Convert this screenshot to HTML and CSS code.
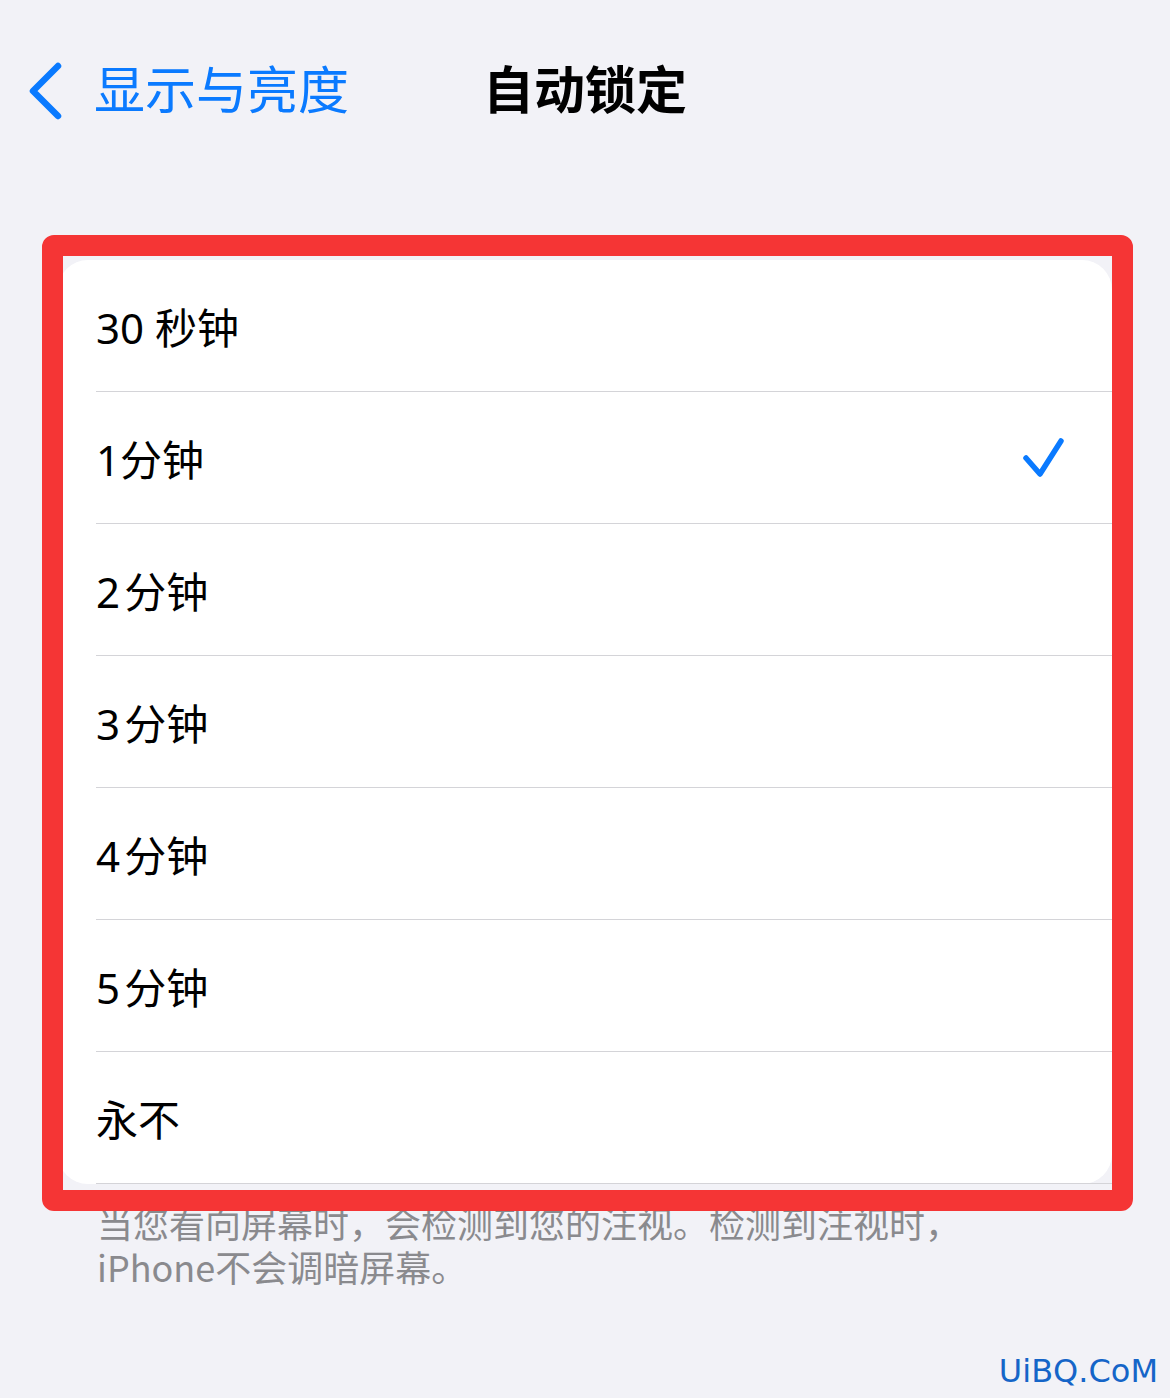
FILE: index.html
```html
<!DOCTYPE html>
<html lang="zh-CN">
<head>
  <meta charset="UTF-8">
  <title>自动锁定</title>
  <link rel="stylesheet" href="styles.css">
</head>
<body>

  <header class="nav">
    <a class="back" href="#">
      <svg class="chevron" width="36" height="58" viewBox="0 0 36 58">
        <polyline points="31,4 6,29 31,54" fill="none" stroke="#0a7aff" stroke-width="6.5" stroke-linecap="round" stroke-linejoin="round"/>
      </svg>
      <span>显示与亮度</span>
    </a>
    <h1 class="title">自动锁定</h1>
    <div></div>
  </header>

  <section class="section">
    <div class="card">
      <div class="row"><div class="row-inner">30 秒钟</div></div>
      <div class="row">
        <div class="row-inner">
          <span>1分钟</span>
          <svg class="check" width="44" height="40" viewBox="0 0 44 40">
            <polyline points="4,20 18,36 39,3" fill="none" stroke="#0a7aff" stroke-width="5.5" stroke-linecap="round" stroke-linejoin="round"/>
          </svg>
        </div>
      </div>
      <div class="row"><div class="row-inner">2&#8202;分钟</div></div>
      <div class="row"><div class="row-inner">3&#8202;分钟</div></div>
      <div class="row"><div class="row-inner">4&#8202;分钟</div></div>
      <div class="row"><div class="row-inner">5&#8202;分钟</div></div>
      <div class="row"><div class="row-inner">永不</div></div>

      <!-- annotation frame drawn over the list -->
      <div class="frame"></div>
    </div>

    <p class="footnote">当您看向屏幕时，会检测到您的注视。检测到注视时，<br>iPhone不会调暗屏幕。</p>
  </section>

  <div class="watermark">UiBQ.CoM</div>

</body>
</html>
```

FILE: styles.css
```css
body {
  margin: 0;
  background: #f2f2f7;
  font-family: "Noto Sans", "Noto Sans CJK SC", sans-serif;
  color: #000;
  width: 1170px;
  height: 1398px;
  position: relative;
  overflow: hidden;
}
.nav {
  height: 174px;
  padding-bottom: 8px;
  display: grid;
  grid-template-columns: 1fr auto 1fr;
  align-items: center;
}
.back {
  display: flex;
  align-items: center;
  gap: 31px;
  padding-left: 27px;
  color: #0a7aff;
  text-decoration: none;
  font-size: 51px;
  font-family: "Noto Sans CJK SC", sans-serif;
}
.chevron {
  display: block;
  margin-top: 8px;
}
.title {
  margin: 0;
  font-size: 51px;
  font-weight: bold;
  font-family: "Noto Sans CJK SC", sans-serif;
}
.section {
  padding-top: 78px;
}
.card {
  position: relative;
  margin: 0 58px;
  background: #fff;
  border-radius: 30px;
}
.row {
  padding-left: 38px;
}
.row-inner {
  height: 131px;
  display: flex;
  align-items: center;
  justify-content: space-between;
  padding-right: 46px;
  border-bottom: 1px solid #d4d4d8;
  font-size: 42px;
}
.row:last-of-type .row-inner {
  border-bottom: none;
  height: 132px;
}
.check {
  display: block;
}
.frame {
  position: absolute;
  top: -25px;
  left: -16px;
  right: -21px;
  bottom: -27px;
  border: 21px solid #f53535;
  border-radius: 12px;
  z-index: 2;
}
.footnote {
  margin: 0;
  padding: 16px 40px 0 97px;
  font-size: 36px;
  line-height: 44px;
  color: #8a8a8e;
  font-family: "Noto Sans CJK SC", sans-serif;
}
.watermark {
  position: absolute;
  right: 12px;
  bottom: 8px;
  font-family: "DejaVu Sans", sans-serif;
  font-size: 32px;
  color: #1565c8;
}
```
